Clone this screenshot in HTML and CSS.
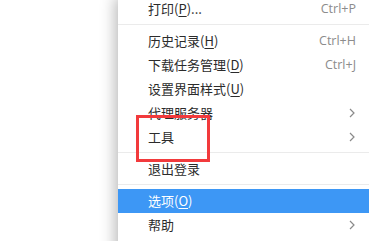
FILE: index.html
```html
<!DOCTYPE html>
<html lang="zh-CN">
<head>
<meta charset="utf-8">
<link rel="stylesheet" href="styles.css">
</head>
<body>
<div class="stage">
  <div class="menu">
    <div class="item"><span class="label">打印(<u>P</u>)...</span><span class="key">Ctrl+P</span></div>
    <div class="sep"></div>
    <div class="item"><span class="label">历史记录(<u>H</u>)</span><span class="key">Ctrl+H</span></div>
    <div class="item"><span class="label">下载任务管理(<u>D</u>)</span><span class="key">Ctrl+J</span></div>
    <div class="item"><span class="label">设置界面样式(<u>U</u>)</span></div>
    <div class="item"><span class="label">代理服务器</span><svg class="arrow" viewBox="0 0 6 10" width="6" height="10"><path d="M1 1l4 4-4 4" fill="none" stroke="#8a8a8a" stroke-width="1.2"/></svg></div>
    <div class="item"><span class="label">工具</span><svg class="arrow" viewBox="0 0 6 10" width="6" height="10"><path d="M1 1l4 4-4 4" fill="none" stroke="#8a8a8a" stroke-width="1.2"/></svg></div>
    <div class="sep"></div>
    <div class="item"><span class="label">退出登录</span></div>
    <div class="sep"></div>
    <div class="item selected"><span class="label">选项(<u>O</u>)</span></div>
    <div class="item"><span class="label">帮助</span><svg class="arrow" viewBox="0 0 6 10" width="6" height="10"><path d="M1 1l4 4-4 4" fill="none" stroke="#8a8a8a" stroke-width="1.2"/></svg></div>
  </div>
  <div class="highlight-box"></div>
</div>
</body>
</html>
```
FILE: styles.css
```css
html, body {
  margin: 0;
  padding: 0;
  background: #ffffff;
  overflow: hidden;
}
.stage {
  position: relative;
  width: 369px;
  height: 241px;
  overflow: hidden;
  font-family: "Noto Sans CJK SC", "Noto Sans", sans-serif;
  font-size: 13px;
  color: #2b2b2b;
}
.menu {
  margin-left: 118px;
  margin-top: -3px;
  width: 251px;
  background: #ffffff;
  box-shadow: -3px 0 14px rgba(0, 0, 0, 0.28);
  min-height: 260px;
}
.item {
  display: flex;
  align-items: center;
  height: 24px;
  padding: 0 13px 0 30px;
  line-height: 24px;
  white-space: nowrap;
}
.label {
  flex: 1;
}
.label u {
  text-decoration: underline;
  text-underline-offset: 2px;
}
.key {
  color: #8c8c8c;
  font-family: "Open Sans", "Noto Sans", sans-serif;
  font-size: 12.5px;
}
.arrow {
  margin-right: 1px;
}
.sep {
  height: 1px;
  background: #ebebeb;
  margin: 3px 0 4px;
}
.selected {
  background: #3d97f5;
  color: #ffffff;
}
.highlight-box {
  position: absolute;
  left: 136px;
  top: 115px;
  width: 68px;
  height: 41px;
  border: 3px solid #f23a3c;
}
```
